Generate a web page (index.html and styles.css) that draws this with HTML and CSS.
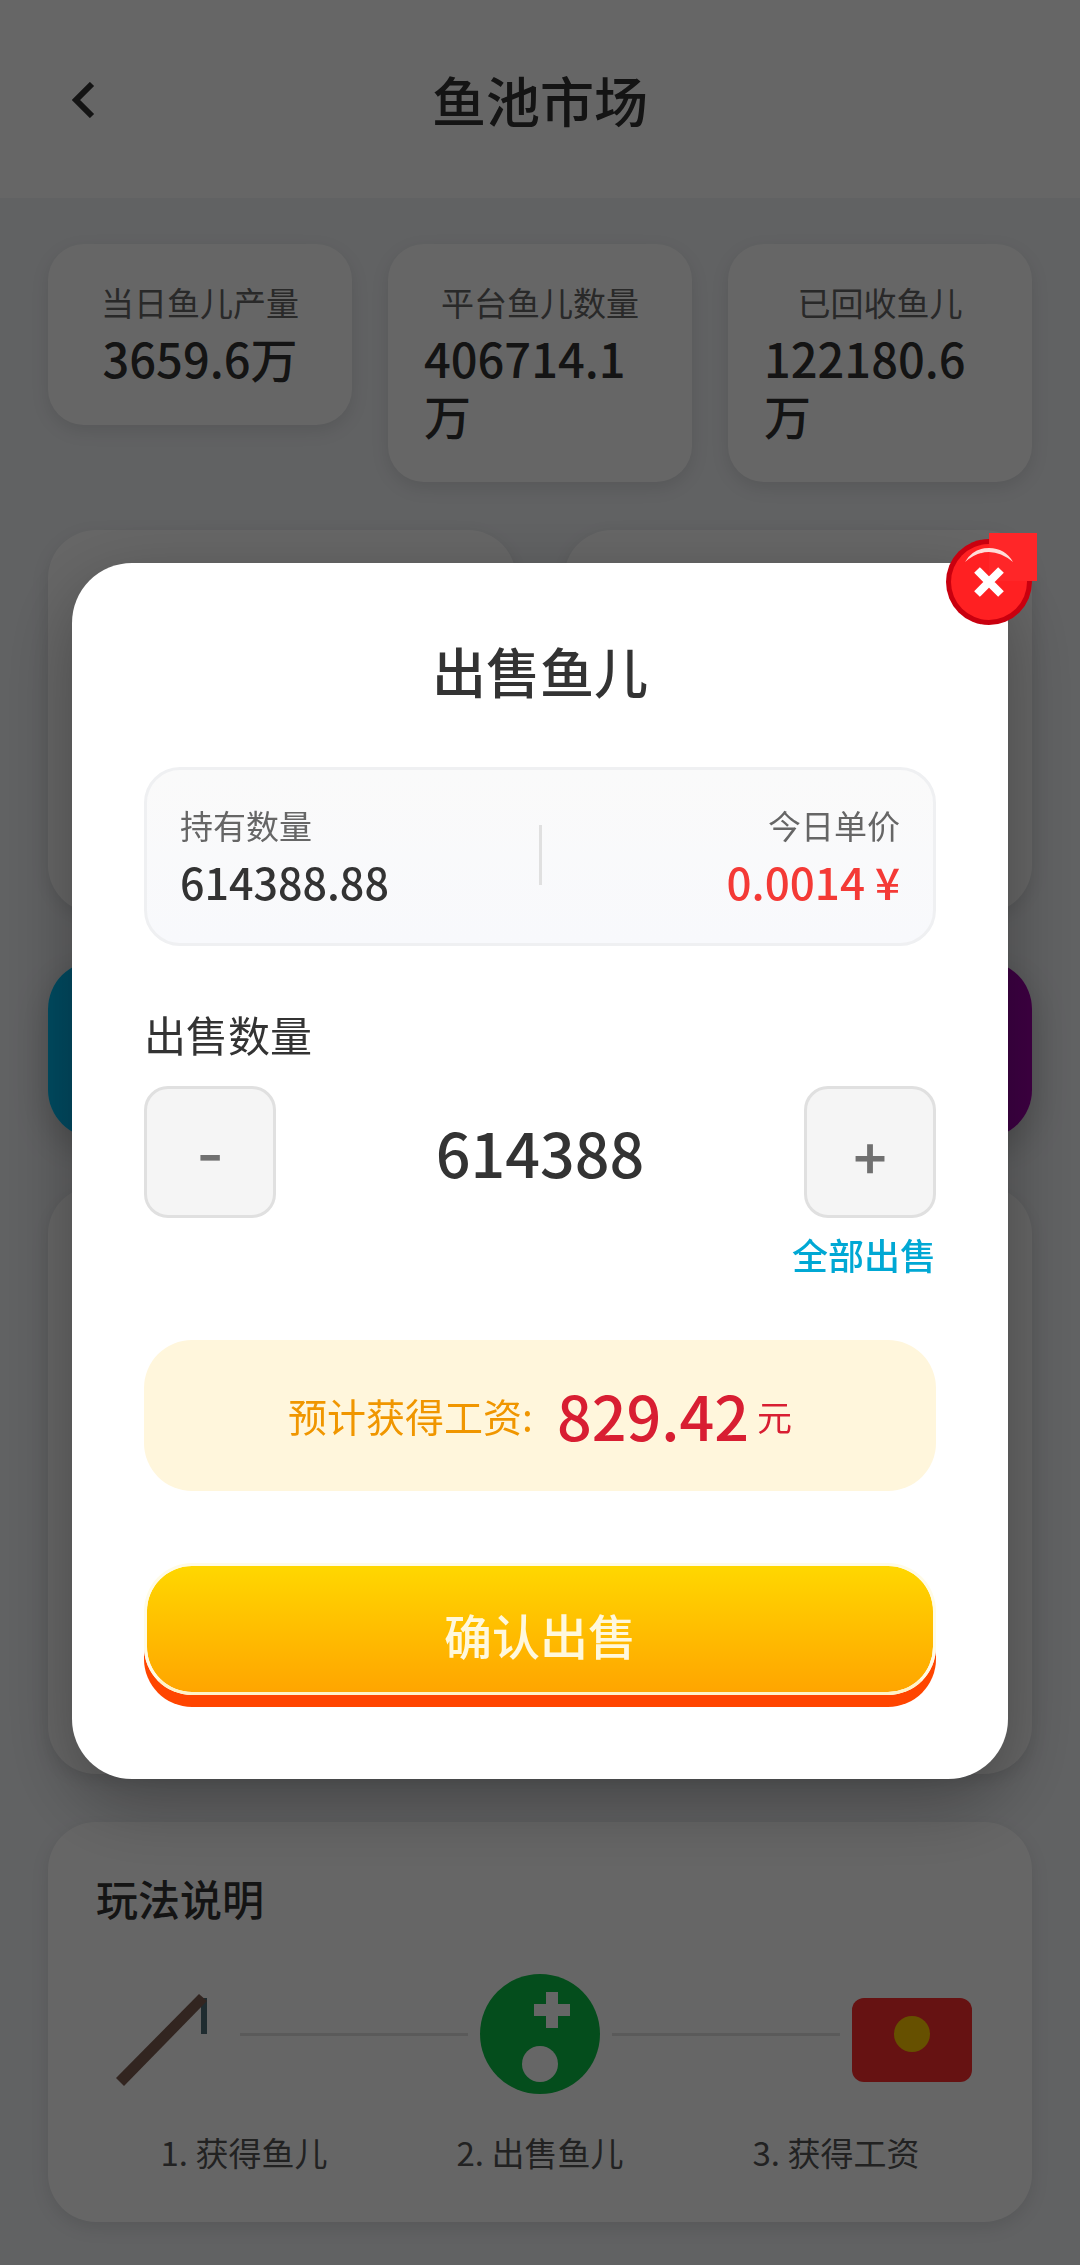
FILE: index.html
```html
<!DOCTYPE html>
<html lang="zh-CN">
<head>
<meta charset="utf-8">
<meta name="viewport" content="width=device-width, initial-scale=1">
<title>鱼池市场</title>
<link rel="stylesheet" href="styles.css">
</head>
<body>
<div class="page">
  <header class="topbar">
    <button class="back" type="button" aria-label="返回">
      <svg width="24" height="36" viewBox="0 0 24 36" fill="none" stroke="currentColor" stroke-width="6"><path d="M20 2 4 18l16 16"/></svg>
    </button>
    <h1 class="topbar-title">鱼池市场</h1>
  </header>
  <main class="content">
    <section class="stats">
      <div class="card stat"><span class="stat-label">当日鱼儿产量</span><strong class="stat-value">3659.6万</strong></div>
      <div class="card stat"><span class="stat-label">平台鱼儿数量</span><strong class="stat-value">406714.1万</strong></div>
      <div class="card stat"><span class="stat-label">已回收鱼儿</span><strong class="stat-value">122180.6万</strong></div>
    </section>
    <section class="pair">
      <div class="card panel"></div>
      <div class="card panel"></div>
    </section>
    <div class="banner"></div>
    <section class="card chart"></section>
    <section class="card guide">
      <h2 class="guide-title">玩法说明</h2>
      <div class="guide-icons">
        <svg width="120" height="120" viewBox="0 0 120 120"><path fill="#4f6f78" d="M93 24h6v36h-6z"/><path fill="#7d5c50" d="M8 104 91 20l8 7-83 85z"/></svg>
        <span class="guide-line"></span>
        <svg width="120" height="120" viewBox="0 0 120 120"><circle cx="60" cy="60" r="60" fill="#0cc046"/><path fill="#fff" d="M66 18h12v12h12v12H78v12H66V42H54V30h12z"/><circle cx="60" cy="90" r="18" fill="#fff"/></svg>
        <span class="guide-line"></span>
        <svg width="120" height="120" viewBox="0 0 120 120"><rect y="24" width="120" height="84" rx="12" fill="#ff2d2d"/><circle cx="60" cy="60" r="18" fill="#ffc800"/></svg>
      </div>
      <ol class="guide-steps">
        <li>1. 获得鱼儿</li>
        <li>2. 出售鱼儿</li>
        <li>3. 获得工资</li>
      </ol>
    </section>
  </main>
</div>

<div class="overlay">
  <form class="modal" role="dialog" aria-labelledby="sell-title">
    <button class="close" type="button" aria-label="关闭">
      <svg width="92" height="92" viewBox="0 0 92 92">
        <circle cx="43" cy="49" r="43" fill="#c9000f"/>
        <circle cx="43" cy="49" r="38" fill="#ff2022"/>
        <path fill="#ff2628" d="M43 0h48v48H43z"/>
        <path fill="#ffdcd8" d="M19 29Q27 15 43 15t24 14Q55 19 43 19t-24 10z"/>
        <path d="M31 37l24 24M55 37 31 61" stroke="#fff" stroke-width="8"/>
      </svg>
    </button>
    <h2 class="modal-title" id="sell-title">出售鱼儿</h2>
    <div class="info">
      <div class="info-item"><span class="info-label">持有数量</span><span class="info-value">614388.88</span></div>
      <span class="info-divider"></span>
      <div class="info-item info-end"><span class="info-label">今日单价</span><span class="info-value price">0.0014 ¥</span></div>
    </div>
    <label class="amount-label" for="amount">出售数量</label>
    <div class="stepper">
      <button class="step" type="button" aria-label="减少">-</button>
      <input class="amount" id="amount" type="text" inputmode="numeric" value="614388">
      <button class="step" type="button" aria-label="增加">+</button>
    </div>
    <a class="sell-all" href="#all">全部出售</a>
    <p class="estimate"><span class="estimate-label">预计获得工资:</span><strong class="estimate-value">829.42</strong><span class="estimate-unit">元</span></p>
    <button class="confirm" type="submit">确认出售</button>
  </form>
</div>
</body>
</html>
```
FILE: styles.css
```css
* {
  box-sizing: border-box;
}

body {
  margin: 0;
  font-family: "Noto Sans CJK SC", sans-serif;
  color: #333;
  background: #f2f4f7;
}

h1,
h2,
p,
ol {
  margin: 0;
  padding: 0;
}

button,
input {
  font-family: inherit;
  margin: 0;
  padding: 0;
  border: 0;
}

svg {
  display: block;
  flex: none;
}

.page {
  min-height: 100vh;
}

/* Top bar */
.topbar {
  display: grid;
  grid-template-columns: 96px 1fr 96px;
  align-items: center;
  padding: 60px 48px 58px;
  background: #fff;
}

.back {
  justify-self: start;
  padding: 12px 24px;
  color: #333;
  background: none;
}

.topbar-title {
  text-align: center;
  font-size: 54px;
  line-height: 80px;
  font-weight: 500;
}

/* Page content */
.content {
  display: flex;
  flex-direction: column;
  gap: 48px;
  padding: 46px 48px 44px;
}

.card {
  background: #fff;
  border-radius: 48px;
  box-shadow: 0 6px 18px rgba(0, 0, 0, 0.1);
}

.stats {
  display: grid;
  grid-template-columns: repeat(3, minmax(0, 1fr));
  align-items: start;
  gap: 36px;
}

.stat {
  display: flex;
  flex-direction: column;
  align-items: center;
  gap: 3px;
  padding: 34px 36px 39px;
  border-radius: 36px;
}

.stat-label {
  font-size: 33px;
  line-height: 48px;
  color: #666;
}

.stat-value {
  font-size: 47px;
  line-height: 57px;
  font-weight: 500;
}

.pair {
  display: grid;
  grid-template-columns: 1fr 1fr;
  gap: 48px;
}

.panel {
  min-height: 383px;
}

.banner {
  min-height: 177px;
  border-radius: 48px;
  background: linear-gradient(90deg, #00bcf2, #9c00a6);
  box-shadow: 0 12px 36px rgba(0, 0, 0, 0.2);
}

.chart {
  min-height: 588px;
}

.guide {
  padding: 48px;
}

.guide-title {
  font-size: 42px;
  line-height: 56px;
  font-weight: 500;
}

.guide-icons {
  display: flex;
  align-items: center;
  gap: 12px;
  padding: 48px 12px 36px;
}

.guide-line {
  flex: 1;
  height: 3px;
  background: #e0e0e0;
}

.guide-steps {
  display: grid;
  grid-template-columns: repeat(3, 1fr);
  list-style: none;
  text-align: center;
  font-size: 33px;
  line-height: 44px;
  color: #555;
}

/* Sell dialog */
.overlay {
  position: fixed;
  inset: 0;
  display: flex;
  align-items: center;
  padding: 76px 72px 0;
  background: rgba(0, 0, 0, 0.6);
}

.modal {
  position: relative;
  display: flex;
  flex-direction: column;
  width: 100%;
  padding: 72px;
  border-radius: 60px;
  background: #fff;
  box-shadow: 0 24px 72px rgba(0, 0, 0, 0.3);
}

.close {
  position: absolute;
  top: -30px;
  right: -30px;
  background: none;
}

.modal-title {
  margin-bottom: 60px;
  text-align: center;
  font-size: 54px;
  line-height: 72px;
  font-weight: 500;
}

.info {
  display: flex;
  align-items: center;
  padding: 31px 33px 34px;
  border: 3px solid #eff0f2;
  border-radius: 36px;
  background: linear-gradient(#fafafa, #f8f9fc);
}

.info-item {
  display: flex;
  flex: 1;
  flex-direction: column;
  gap: 4px;
}

.info-end {
  align-items: flex-end;
}

.info-label {
  font-size: 33px;
  line-height: 48px;
  color: #666;
}

.info-value {
  font-size: 43px;
  line-height: 56px;
  font-weight: 500;
}

.price {
  font-size: 44px;
  color: #f43a36;
}

.info-divider {
  width: 3px;
  height: 60px;
  background: #e0e0e0;
}

.amount-label {
  margin: 58px 0 22px;
  font-size: 42px;
  line-height: 60px;
}

.stepper {
  display: flex;
  align-items: center;
}

.step {
  flex: none;
  width: 132px;
  height: 132px;
  padding-top: 4px;
  border: 3px solid #e0e0e0;
  border-radius: 24px;
  font-family: Inter, sans-serif;
  font-size: 60px;
  line-height: 60px;
  font-weight: 500;
  color: #707070;
  background: #f5f5f5;
}

.amount {
  flex: 1;
  min-width: 0;
  height: 96px;
  text-align: center;
  font-size: 61px;
  font-weight: 500;
  color: #333;
  background: none;
}

.sell-all {
  align-self: flex-end;
  margin: 10px 0 60px;
  font-size: 36px;
  line-height: 52px;
  font-weight: 500;
  color: #00a8d4;
  text-decoration: none;
}

.estimate {
  display: flex;
  align-items: center;
  justify-content: center;
  min-height: 151px;
  border-radius: 48px;
  color: #d81e32;
  background: #fff6dc;
}

.estimate-label {
  margin-right: 24px;
  font-size: 39px;
  color: #f09600;
}

.estimate-value {
  margin-right: 8px;
  font-size: 61px;
  line-height: 90px;
  font-weight: 500;
}

.estimate-unit {
  font-size: 35px;
}

.confirm {
  height: 132px;
  margin: 72px 0 12px;
  padding-top: 10px;
  border: 3px solid #fffbe6;
  border-bottom-color: #fff3c8;
  border-radius: 48px;
  font-size: 48px;
  font-weight: 500;
  color: #fff8dc;
  background: linear-gradient(#ffd700, #ffa500) padding-box;
  box-shadow: 0 12px 0 #ff4500;
}
```
